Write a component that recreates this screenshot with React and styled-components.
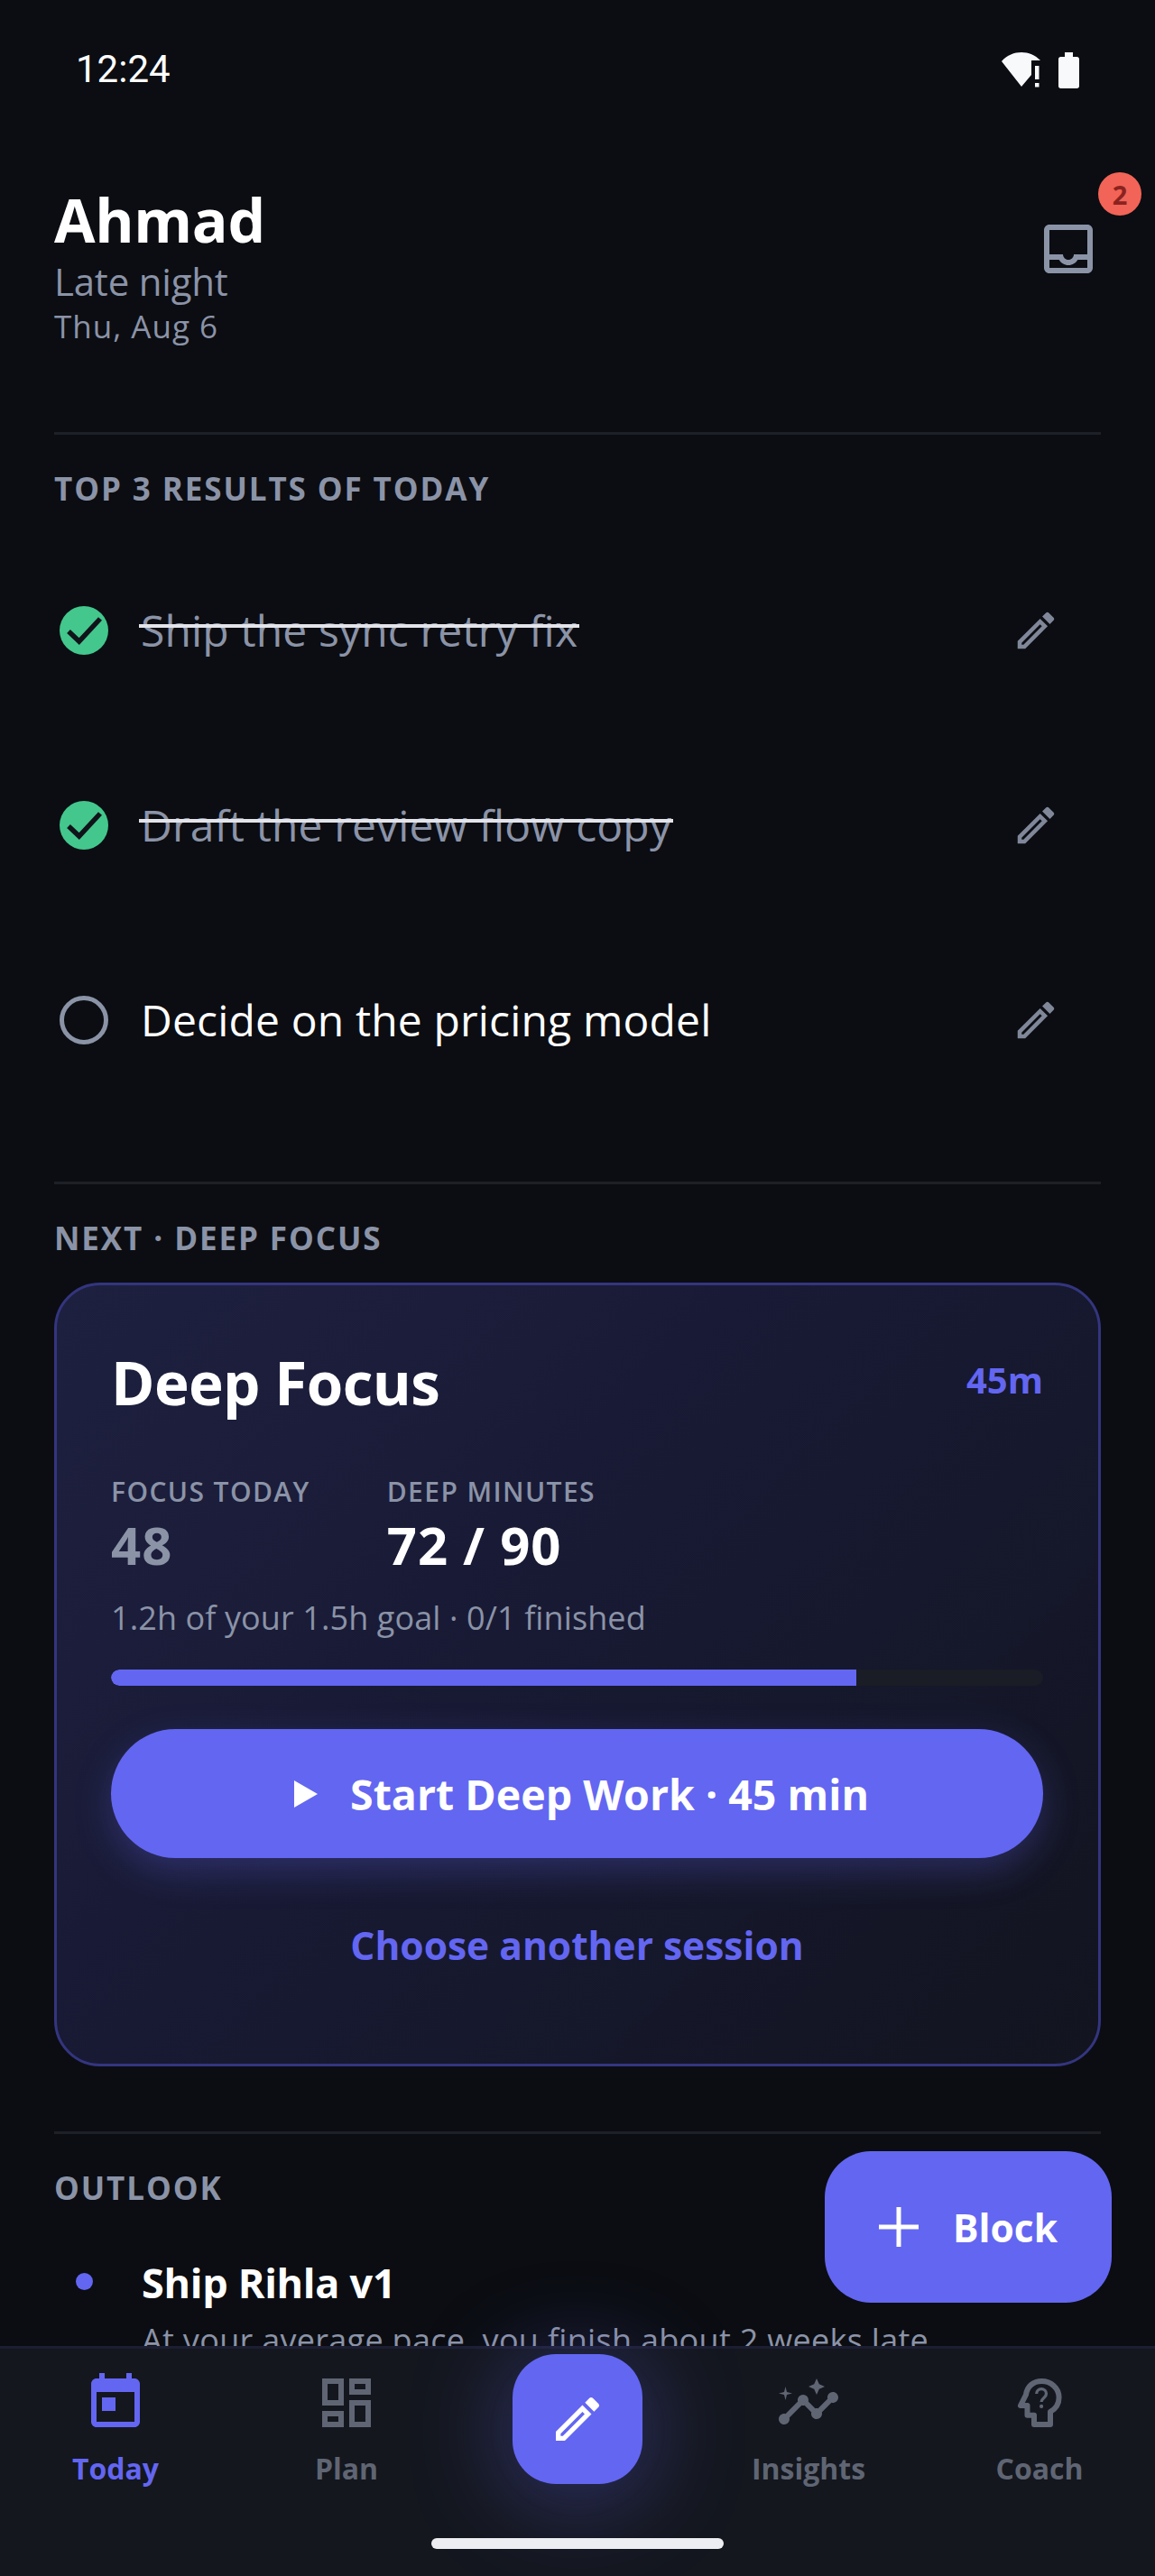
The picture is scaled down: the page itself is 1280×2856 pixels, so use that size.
import React from 'react';
import styled, { createGlobalStyle } from 'styled-components';

const Global = createGlobalStyle`
  html, body { margin: 0; padding: 0; background: #0b0d12; }
  #root { width: 1280px; height: 2856px; }
  * { box-sizing: border-box; }
`;

const Screen = styled.div`
  width: 1280px; height: 2856px; display: flex; flex-direction: column;
  background: #0b0d12; color: #fff; position: relative; overflow: hidden;
  font-family: "Open Sans", "Noto Sans", sans-serif;
`;
const StatusBar = styled.div`
  height: 152px; flex: none; display: flex; justify-content: space-between; align-items: flex-start;
  padding: 53px 84px 0 84px;
`;
const Time = styled.div`
  font: 400 42px/48px Roboto, sans-serif; color: #fff;
`;
const StatusIcons = styled.div`
  display: flex; gap: 17px; margin-top: 3px; align-items: flex-start;
`;
const Main = styled.main`
  flex: 1; min-height: 0; overflow: hidden; padding: 0 60px;
`;
const Header = styled.header`
  display: flex; justify-content: space-between; padding-top: 49px; padding-bottom: 94px;
`;
const Name = styled.h1`
  margin: 0; font-size: 66px; line-height: 84px; font-weight: 700; color: #fff; letter-spacing: -0.3px;
`;
const Daypart = styled.div`
  font-size: 42px; line-height: 54px; color: #8b93a7; letter-spacing: -0.2px;
`;
const DateLine = styled.div`
  font-size: 35px; line-height: 46px; color: #8b93a7; letter-spacing: 1px;
`;
const InboxButton = styled.div`
  position: relative; width: 72px; height: 72px; margin-top: 39px; color: #8b93a7;
`;
const Badge = styled.span`
  position: absolute; left: 69px; top: -49px; width: 48px; height: 48px; border-radius: 50%;
  background: #f26457; color: #8a2320; display: flex; align-items: center; justify-content: center;
  font-size: 29px; font-weight: 700; line-height: 1;
`;
const Divider = styled.div`
  height: 3px; background: #1d2027; margin-top: ${p => p.$top || 0}px;
`;
const SectionLabel = styled.div`
  padding-top: 35px; font-size: 35px; line-height: 50px; font-weight: 700; color: #8b93a7; letter-spacing: 1.9px;
  margin-bottom: ${p => (p.$flush ? 0 : 24)}px; height: 85px;
`;
const Row = styled.div`
  height: 216px; display: flex; align-items: center; padding-left: 6px;
`;
const RowText = styled.span`
  margin-left: 36px; flex: 1; font-size: 48px; line-height: 64px; letter-spacing: 0.15px;
  color: ${p => (p.$done ? '#8b93a7' : '#ffffff')};
`;
const Strike = styled.span`
  position: relative; display: inline-block;
  &::after {
    content: ''; position: absolute; left: -2px; right: -2px; top: 25px; height: 4px; background: #e2e4ea;
  }
`;
const EditSlot = styled.div`
  width: 54px; height: 54px; margin-right: 45px; color: #7f8799; flex: none;
`;
const Card = styled.section`
  border: 3px solid #34357f; border-radius: 51px; height: 869px; padding: 66px 61px 0 60px;
  background: linear-gradient(135deg, #1e2040 0%, #181a34 45%, #12141f 100%);
`;
const CardHead = styled.div`
  display: flex; justify-content: space-between; align-items: center; height: 84px;
`;
const CardTitle = styled.h2`
  margin: 0; font-size: 65.5px; line-height: 84px; font-weight: 700; color: #fff; letter-spacing: -0.6px;
`;
const Duration = styled.span`
  font-size: 40px; font-weight: 700; color: #6366f1; margin-top: -8px;
`;
const Stats = styled.div`
  display: flex; margin-top: 59px; gap: 85px;
`;
const Stat = styled.div`
  display: flex; flex-direction: column;
`;
const StatLabel = styled.span`
  font-size: 30px; line-height: 40px; font-weight: 600; color: #8b93a7; letter-spacing: 1.4px;
`;
const StatValue = styled.span`
  margin-top: 4px; font-size: 58px; line-height: 70px; font-weight: 700; letter-spacing: 1px;
  color: ${p => (p.$muted ? '#8b93a7' : '#ffffff')};
`;
const CardNote = styled.div`
  margin-top: 21px; font-size: 36px; line-height: 50px; color: #8b93a7; letter-spacing: 0.1px;
`;
const Track = styled.div`
  margin-top: 32px; height: 18px; border-radius: 9px; background: #1a1c26; overflow: hidden;
`;
const Fill = styled.div`
  height: 100%; background: #6366f1; border-radius: 9px 0 0 9px;
`;
const StartButton = styled.div`
  margin-top: 48px; height: 143px; border-radius: 72px; background: #6366f1; padding-left: 10px;
  box-shadow: 0 14px 40px rgba(99, 102, 241, 0.28);
  display: flex; align-items: center; justify-content: center; gap: 36px;
  font-size: 46.5px; font-weight: 700; color: #fff;
`;
const LinkText = styled.div`
  margin-top: 67px; text-align: center; font-size: 42.5px; line-height: 60px; font-weight: 700; color: #6366f1;
`;
const GoalRow = styled.div`
  display: flex; align-items: flex-start; margin-top: 46px;
`;
const Dot = styled.span`
  width: 19px; height: 19px; border-radius: 50%; background: #6366f1; margin: 23px 0 0 24px; flex: none;
`;
const GoalBody = styled.div`
  margin-left: 54px;
`;
const GoalTitle = styled.div`
  font-size: 45px; line-height: 68px; font-weight: 700; color: #fff; letter-spacing: -0.3px;
`;
const GoalText = styled.div`
  font-size: 36px; line-height: 60px; color: #8b93a7; white-space: nowrap; letter-spacing: 0.3px;
`;
const BlockFab = styled.div`
  position: absolute; left: 914px; top: 2385px; width: 318px; height: 168px; border-radius: 51px;
  background: #6366f1; display: flex; align-items: center; justify-content: center; gap: 38px;
  font-size: 42.5px; font-weight: 700; color: #fff;
`;
const Nav = styled.nav`
  flex: none; height: 255px; background: #14171e; border-top: 3px solid #1c1e33; position: relative;
`;
const NavGrid = styled.div`
  display: grid; grid-template-columns: repeat(5, 256px); padding-top: 24px;
`;
const NavItem = styled.div`
  display: flex; flex-direction: column; align-items: center;
  color: ${p => (p.$active ? '#6366f1' : '#5f6573')};
`;
const NavLabel = styled.span`
  margin-top: 13px; font-size: 32px; line-height: 48px; font-weight: 700; letter-spacing: 0;
`;
const Compose = styled.div`
  width: 144px; height: 144px; margin-top: -18px; border-radius: 48px; background: #6366f1; color: #fff;
  box-shadow: 0 12px 110px rgba(99, 102, 241, 0.42);
  display: flex; align-items: center; justify-content: center;
`;
const HomeBar = styled.div`
  position: absolute; left: 478px; top: 210px; width: 324px; height: 12px; border-radius: 6px; background: #eceef2;
`;

const Glyph = ({ size = 72, d }) => (
  <svg width={size} height={size} viewBox="0 0 24 24" fill="currentColor" style={{ display: 'block' }}>
    <path d={d} />
  </svg>
);

const EDIT = 'M14.06 9.02l.92.92L5.92 19H5v-.92l9.06-9.06M17.66 3c-.25 0-.51.1-.7.29l-1.83 1.83 3.75 3.75 1.83-1.83c.39-.39.39-1.02 0-1.41l-2.34-2.34c-.2-.2-.45-.29-.71-.29zm-3.6 3.19L3 17.25V21h3.75L17.81 9.94l-3.75-3.75z';
const INBOX = 'M19 3H5c-1.1 0-2 .9-2 2v14c0 1.1.9 2 2 2h14c1.1 0 2-.9 2-2V5c0-1.1-.9-2-2-2zm0 16H5v-3h3.56c.69 1.19 1.97 2 3.45 2s2.75-.81 3.45-2H19v3zm0-5h-4.99c0 1.1-.9 2-2 2s-2-.9-2-2H5V5h14v9z';
const TODAY = 'M19 3h-1V1h-2v2H8V1H6v2H5c-1.11 0-1.99.9-1.99 2L3 19c0 1.1.89 2 2 2h14c1.1 0 2-.9 2-2V5c0-1.1-.9-2-2-2zm0 16H5V8h14v11zM7 10h5v5H7z';
const PLAN = 'M19 5v2h-4V5h4M9 5v6H5V5h4m10 8v6h-4v-6h4M9 17v2H5v-2h4M21 3h-8v6h8V3zM11 3H3v10h8V3zm10 8h-8v10h8V11zm-10 4H3v6h8v-6z';
const INSIGHTS = 'M21 8c-1.45 0-2.26 1.44-1.93 2.51l-3.55 3.56c-.3-.09-.74-.09-1.04 0l-2.55-2.55C12.27 10.45 11.46 9 10 9c-1.45 0-2.27 1.44-1.93 2.52l-4.56 4.55C2.44 15.74 1 16.55 1 18c0 1.1.9 2 2 2 1.45 0 2.26-1.44 1.93-2.51l4.55-4.56c.3.09.74.09 1.04 0l2.55 2.55C12.73 16.61 13.54 18 15 18c1.45 0 2.27-1.44 1.93-2.52l3.56-3.55c1.07.33 2.51-.48 2.51-1.93 0-1.1-.9-2-2-2zM15 9l.94-2.07L18 6l-2.06-.93L15 3l-.92 2.07L12 6l2.08.93zM3.5 11L4 9l2-.5L4 8l-.5-2L3 8l-2 .5L3 9z';

const CoachIcon = () => (
  <svg width="72" height="72" viewBox="0 0 24 24" fill="none" stroke="currentColor" style={{ display: 'block' }}>
    <path strokeWidth="2" strokeLinejoin="round" d="M10 20h6v-4.700c2-1.100 3.200-3.100 3.200-5.300 0-3.400-2.900-6-6.400-6C9.600 4 7.400 6 7 9l-2 4h2.500v3.600H10z" />
    <path strokeWidth="1.100" d="M10.900 8.700c0-1 .8-1.800 1.800-1.800s1.800.8 1.800 1.800c0 1.500-1.800 1.400-1.800 3" />
    <circle cx="12.700" cy="13.300" r=".7" fill="currentColor" stroke="none" />
  </svg>
);

const Check = () => (
  <svg width="54" height="54" viewBox="0 0 54 54" style={{ display: 'block', flex: 'none' }}>
    <circle cx="27" cy="27" r="27" fill="#43c78d" />
    <path d="M10 28 L21.700 39 L45 14" fill="none" stroke="#10131a" strokeWidth="5.500" />
  </svg>
);
const Open = () => (
  <svg width="54" height="54" viewBox="0 0 54 54" style={{ display: 'block', flex: 'none' }}>
    <circle cx="27" cy="27" r="24.500" fill="none" stroke="#8b93a7" strokeWidth="5" />
  </svg>
);

const tasks = [
  { text: 'Ship the sync retry fix', done: true },
  { text: 'Draft the review flow copy', done: true },
  { text: 'Decide on the pricing model', done: false },
];

export default function App() {
  return (
    <Screen>
      <Global />
      <StatusBar>
        <Time>12:24</Time>
        <StatusIcons>
          <svg width="48" height="42" viewBox="0 0 48 42" fill="#f8f9fb" style={{ display: 'block' }}>
            <path d="M2 12C8 5 16 2 24 2s15 3 21 9H35v16L24 40z" />
            <rect x="39" y="17" width="4.500" height="15" />
            <rect x="39" y="36" width="4.500" height="4.500" />
          </svg>
          <svg width="23" height="40" viewBox="0 0 23 40" fill="#f8f9fb" style={{ display: 'block', marginTop: 2 }}>
            <path d="M7 0h9v5h4.500c1.400 0 2.500 1.100 2.500 2.500v30c0 1.400-1.100 2.500-2.500 2.500h-18C1.100 40 0 38.900 0 37.500v-30C0 6.100 1.100 5 2.500 5H7z" />
          </svg>
        </StatusIcons>
      </StatusBar>
      <Main>
        <Header>
          <div>
            <Name>Ahmad</Name>
            <Daypart>Late night</Daypart>
            <DateLine>Thu, Aug 6</DateLine>
          </div>
          <InboxButton>
            <Glyph d={INBOX} />
            <Badge>2</Badge>
          </InboxButton>
        </Header>
        <Divider />
        <SectionLabel>TOP 3 RESULTS OF TODAY</SectionLabel>
        {tasks.map(t => (
          <Row key={t.text}>
            {t.done ? <Check /> : <Open />}
            <RowText $done={t.done}>{t.done ? <Strike>{t.text}</Strike> : t.text}</RowText>
            <EditSlot><Glyph size={54} d={EDIT} /></EditSlot>
          </Row>
        ))}
        <Divider $top={71} />
        <SectionLabel>NEXT · DEEP FOCUS</SectionLabel>
        <Card>
          <CardHead>
            <CardTitle>Deep Focus</CardTitle>
            <Duration>45m</Duration>
          </CardHead>
          <Stats>
            <Stat>
              <StatLabel>FOCUS TODAY</StatLabel>
              <StatValue $muted>48</StatValue>
            </Stat>
            <Stat>
              <StatLabel>DEEP MINUTES</StatLabel>
              <StatValue>72 / 90</StatValue>
            </Stat>
          </Stats>
          <CardNote>1.2h of your 1.5h goal · 0/1 finished</CardNote>
          <Track><Fill style={{ width: '80%' }} /></Track>
          <StartButton>
            <svg width="26" height="30" viewBox="0 0 26 30" fill="#fff" style={{ display: 'block' }}><path d="M0 0l26 15L0 30z" /></svg>
            <span>Start Deep Work · 45 min</span>
          </StartButton>
          <LinkText>Choose another session</LinkText>
        </Card>
        <Divider $top={72} />
        <SectionLabel $flush>OUTLOOK</SectionLabel>
        <GoalRow>
          <Dot />
          <GoalBody>
            <GoalTitle>Ship Rihla v1</GoalTitle>
            <GoalText>At your average pace, you finish about 2 weeks late</GoalText>
          </GoalBody>
        </GoalRow>
      </Main>
      <BlockFab>
        <svg width="44" height="44" viewBox="0 0 44 44" stroke="#fff" strokeWidth="5" style={{ display: 'block' }}><path d="M22 0v44M0 22h44" /></svg>
        <span>Block</span>
      </BlockFab>
      <Nav>
        <NavGrid>
          <NavItem $active><Glyph d={TODAY} /><NavLabel>Today</NavLabel></NavItem>
          <NavItem><Glyph d={PLAN} /><NavLabel>Plan</NavLabel></NavItem>
          <NavItem><Compose><Glyph size={64} d={EDIT} /></Compose></NavItem>
          <NavItem><Glyph d={INSIGHTS} /><NavLabel>Insights</NavLabel></NavItem>
          <NavItem><CoachIcon /><NavLabel>Coach</NavLabel></NavItem>
        </NavGrid>
        <HomeBar />
      </Nav>
    </Screen>
  );
}
